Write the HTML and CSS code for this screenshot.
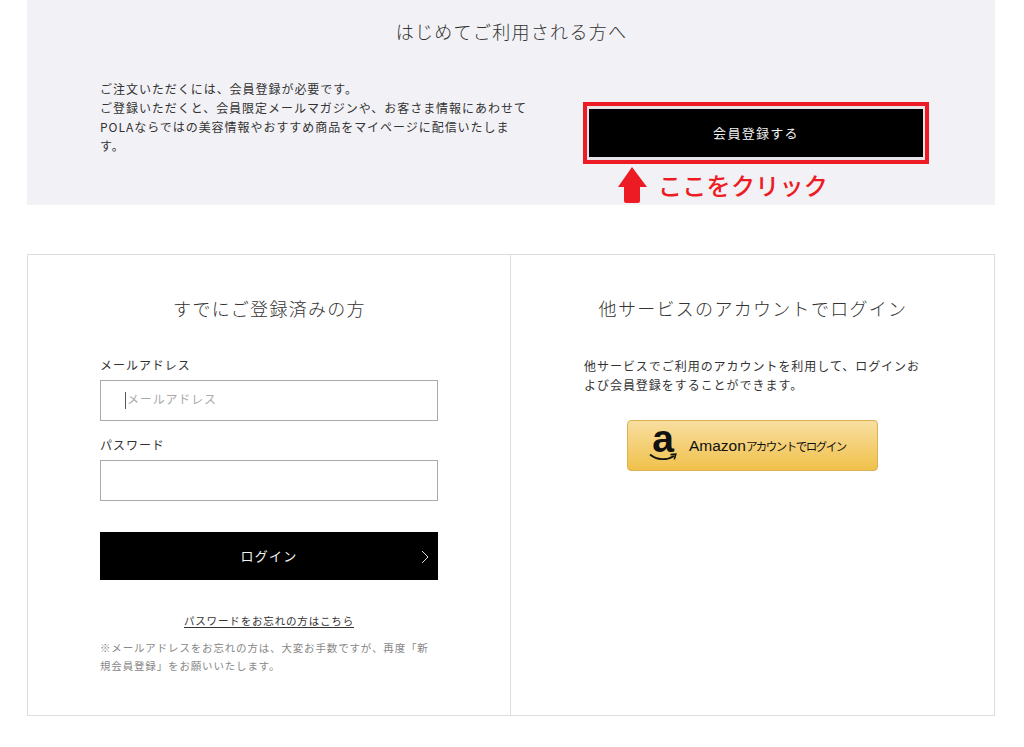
FILE: index.html
```html
<!DOCTYPE html>
<html lang="ja">
<head>
<meta charset="utf-8">
<title>ログイン</title>
<link rel="stylesheet" href="styles.css">
</head>
<body>
<section class="intro">
  <h2 class="title">はじめてご利用される方へ</h2>
  <div class="intro-row">
    <p class="intro-text">ご注文いただくには、会員登録が必要です。<br>ご登録いただくと、会員限定メールマガジンや、お客さま情報にあわせてPOLAならではの美容情報やおすすめ商品をマイページに配信いたします。</p>
    <div class="intro-action">
      <div class="highlight"><a class="register">会員登録する</a></div>
      <div class="callout">
        <svg class="arrow" width="29" height="37" viewBox="0 0 29 37"><path d="M14 0 L29 20 L22 20 L22 34 Q22 36 20 36 L8 36 Q6 36 6 34 L6 20 L0 20 Z" fill="#ed1c24"/></svg>
        <span class="callout-text">ここをクリック</span>
      </div>
    </div>
  </div>
</section>
<section class="login">
  <div class="col col-form">
    <h2 class="title">すでにご登録済みの方</h2>
    <form class="form">
      <label class="label">メールアドレス</label>
      <div class="field"><input class="input input-email" type="text" placeholder="メールアドレス"><span class="caret"></span></div>
      <label class="label label-pass">パスワード</label>
      <div class="field"><input class="input" type="password"></div>
      <a class="submit">ログイン<svg class="chev" width="8" height="14" viewBox="0 0 8 14"><path d="M1 1 L7 7 L1 13" fill="none" stroke="#ddd" stroke-width="1"/></svg></a>
      <a class="forgot">パスワードをお忘れの方はこちら</a>
      <p class="note">※メールアドレスをお忘れの方は、大変お手数ですが、再度「新規会員登録」をお願いいたします。</p>
    </form>
  </div>
  <div class="col col-social">
    <h2 class="title">他サービスのアカウントでログイン</h2>
    <p class="social-text">他サービスでご利用のアカウントを利用して、ログインおよび会員登録をすることができます。</p>
    <a class="amazon">
      <span class="amazon-logo"><span class="amazon-a">a</span><svg class="smile" width="28" height="9" viewBox="0 0 28 9"><path d="M1 1.5 C8 7.5 18 7.5 25 3" fill="none" stroke="#111" stroke-width="1.8"/><path d="M21.5 1.6 L26.8 1.2 L25.3 6.4" fill="none" stroke="#111" stroke-width="1.6"/></svg></span>
      <span class="amazon-label"><span class="amazon-en">Amazon</span>アカウントでログイン</span>
    </a>
  </div>
</section>
</body>
</html>
```

FILE: styles.css
```css
* { box-sizing: border-box; }
html, body { margin: 0; padding: 0; }
body {
  width: 1024px;
  height: 747px;
  overflow: hidden;
  background: #fff;
  color: #333;
  font-family: "Noto Sans CJK JP", "Noto Sans", sans-serif;
  font-size: 12px;
  letter-spacing: .08em;
}
.title {
  margin: 0;
  padding-left: 1px;
  font-size: 18px;
  font-weight: 300;
  line-height: 24px;
  text-align: center;
  color: #333;
  letter-spacing: 1.3px;
}
.intro {
  margin: 0 29px 0 27px;
  height: 205px;
  padding-top: 19px;
  background: #f2f1f6;
}
.intro-row {
  display: flex;
  margin-top: 36px;
  padding-left: 73px;
}
.intro-text {
  margin: 0;
  width: 430px;
  line-height: 19px;
}
.intro-action {
  margin: 23px 0 0 53px;
  width: 346px;
}
.highlight {
  height: 62px;
  border: 4px solid #ed1c24;
}
.register {
  display: flex;
  align-items: center;
  justify-content: center;
  height: 100%;
  padding-bottom: 1px;
  background: #000;
  border-style: solid;
  border-color: #e6e5ea;
  border-width: 3px 2px;
  color: #f2f2f2;
  font-size: 13px;
  letter-spacing: .1em;
}
.callout {
  display: flex;
  align-items: center;
  margin: 3px 0 0 35px;
  gap: 11px;
}
.arrow { display: block; }
.callout-text {
  color: #ed1c24;
  font-size: 24px;
  font-weight: 500;
  line-height: 30px;
  letter-spacing: .3px;
  margin-bottom: 2px;
}
.login {
  display: grid;
  grid-template-columns: 483px 1fr;
  margin: 49px 29px 0 27px;
  height: 462px;
  border: 1px solid #ddd;
}
.col { padding-top: 41px; }
.col-form {
  border-right: 1px solid #ddd;
  padding-left: 72px;
  padding-right: 72px;
}
.form { margin-top: 35px; }
.label {
  display: block;
  line-height: 20px;
}
.label-pass { margin-top: 14px; }
.field {
  position: relative;
  margin-top: 5px;
}
.input {
  display: block;
  width: 100%;
  height: 41px;
  margin: 0;
  border: 1px solid #aaa;
  border-radius: 0;
  background: #fff;
  padding: 0 0 5px 26px;
  font: inherit;
  letter-spacing: .07em;
  outline: none;
}
.input::placeholder { color: #aaa; opacity: 1; }
.caret {
  position: absolute;
  left: 25px;
  top: 12px;
  width: 1px;
  height: 17px;
  background: #555;
}
.submit {
  position: relative;
  display: flex;
  align-items: center;
  justify-content: center;
  height: 48px;
  margin-top: 31px;
  padding-bottom: 2px;
  background: #000;
  color: #f2f2f2;
  font-size: 13px;
  letter-spacing: .1em;
}
.chev {
  position: absolute;
  right: 9px;
  top: 18px;
}
.forgot {
  display: block;
  margin-top: 33px;
  text-align: center;
  font-size: 10.5px;
  line-height: 16px;
  letter-spacing: .84px;
  text-decoration: underline;
  text-underline-offset: 2px;
}
.note {
  margin: 10px 0 0;
  font-size: 10.5px;
  line-height: 18px;
  letter-spacing: .84px;
  color: #888;
}
.social-text {
  margin: 36px 72px 0 73px;
  line-height: 19px;
}
.amazon {
  display: flex;
  align-items: center;
  width: 251px;
  height: 51px;
  margin: 26px 0 0 116px;
  padding-left: 21px;
  border: 1px solid #dfb04f;
  border-radius: 4px;
  background: linear-gradient(#f8dea0, #f0c14b);
  color: #111;
}
.amazon-logo {
  position: relative;
  display: block;
  width: 28px;
  height: 42px;
}
.amazon-a {
  display: block;
  margin-top: -7px;
  text-align: center;
  font-family: "Liberation Sans", sans-serif;
  font-size: 39px;
  font-weight: 700;
  line-height: 42px;
  letter-spacing: 0;
  color: #111;
}
.smile {
  position: absolute;
  left: 0;
  top: 28px;
}
.amazon-label {
  margin-left: 12px;
  font-size: 11.5px;
  letter-spacing: -1.5px;
  white-space: nowrap;
}
.amazon-en {
  font-family: "Liberation Sans", sans-serif;
  font-size: 15.5px;
  letter-spacing: 0;
}
```
